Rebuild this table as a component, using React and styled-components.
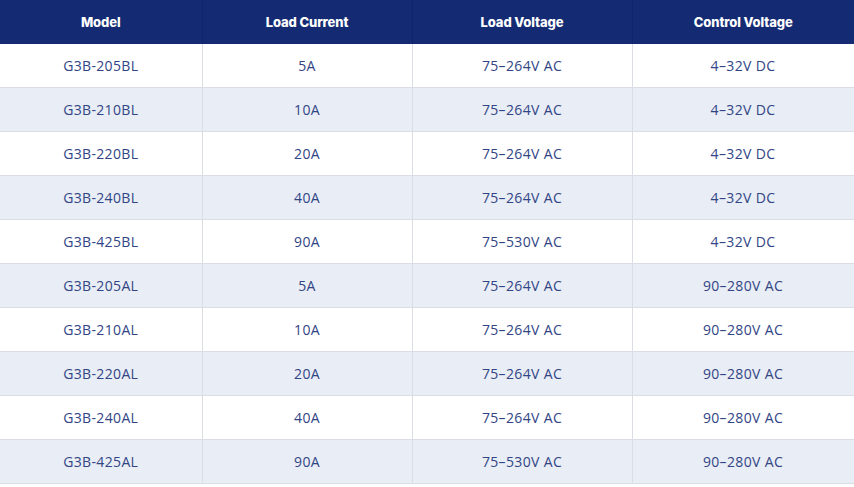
import React from "react";
import styled, { createGlobalStyle } from "styled-components";

const Global = createGlobalStyle`
  html, body { margin: 0; padding: 0; background: #ffffff; }
  body { font-family: "Open Sans", "Liberation Sans", sans-serif; }
`;

const Table = styled.table`
  width: 854px;
  border-collapse: collapse;
  table-layout: fixed;
`;

const HeadCell = styled.th`
  height: 44px;
  padding: 0;
  background: #142b73;
  color: #ffffff;
  font-family: "Inter", "Open Sans", sans-serif;
  font-weight: 800;
  font-size: 13px;
  letter-spacing: -0.1px;
  text-align: center;
  vertical-align: middle;
  border-left: 1px solid #10256a;
  &:first-child { border-left: none; }
`;

const Row = styled.tr`
  background: ${(p) => (p.$striped ? "#e9edf5" : "#ffffff")};
`;

const Cell = styled.td`
  height: 43px;
  padding: 0;
  text-align: center;
  vertical-align: middle;
  color: #314585;
  font-size: 14px;
  font-weight: 400;
  letter-spacing: 0.35px;
  border: 1px solid #dadde3;
  border-top: none;
  &:first-child { border-left: none; }
`;

const columns = ["Model", "Load Current", "Load Voltage", "Control Voltage"];
const widths = [202, 210, 220, 222];

const rows = [
  ["G3B-205BL", "5A", "75–264V AC", "4–32V DC"],
  ["G3B-210BL", "10A", "75–264V AC", "4–32V DC"],
  ["G3B-220BL", "20A", "75–264V AC", "4–32V DC"],
  ["G3B-240BL", "40A", "75–264V AC", "4–32V DC"],
  ["G3B-425BL", "90A", "75–530V AC", "4–32V DC"],
  ["G3B-205AL", "5A", "75–264V AC", "90–280V AC"],
  ["G3B-210AL", "10A", "75–264V AC", "90–280V AC"],
  ["G3B-220AL", "20A", "75–264V AC", "90–280V AC"],
  ["G3B-240AL", "40A", "75–264V AC", "90–280V AC"],
  ["G3B-425AL", "90A", "75–530V AC", "90–280V AC"],
];

export default function App() {
  return (
    <>
      <Global />
      <Table>
        <colgroup>
          {widths.map((w, i) => (
            <col key={i} style={{ width: w }} />
          ))}
        </colgroup>
        <thead>
          <tr>
            {columns.map((c) => (
              <HeadCell key={c}>{c}</HeadCell>
            ))}
          </tr>
        </thead>
        <tbody>
          {rows.map((r, i) => (
            <Row key={r[0]} $striped={i % 2 === 1}>
              {r.map((v, j) => (
                <Cell key={j}>{v}</Cell>
              ))}
            </Row>
          ))}
        </tbody>
      </Table>
    </>
  );
}
